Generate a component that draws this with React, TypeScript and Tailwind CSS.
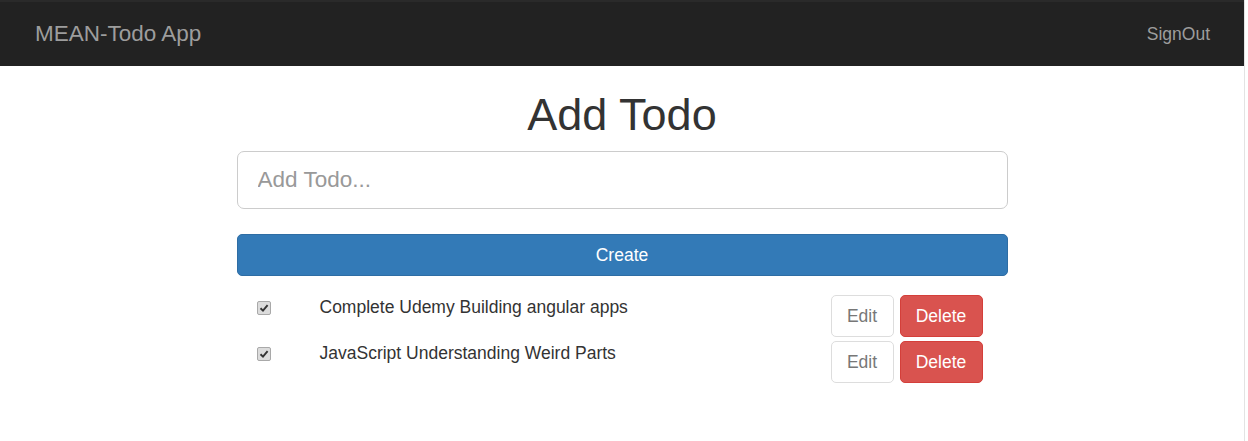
import React, { useState } from "react";

type Todo = { id: number; text: string; done: boolean };

const initialTodos: Todo[] = [
  { id: 1, text: "Complete Udemy Building angular apps", done: true },
  { id: 2, text: "JavaScript Understanding Weird Parts", done: true },
];

const CheckBox = ({ checked }: { checked: boolean }) => (
  <span className="mt-[6px] ml-[20px] flex h-[14px] w-[14px] items-center justify-center rounded-[2px] border border-[#a9a9a9] bg-[#dcdcdc]">
    {checked && (
      <svg width="10" height="10" viewBox="0 0 10 10">
        <path d="M1.5 5.2 L4 7.6 L8.6 2.2" fill="none" stroke="#333" strokeWidth="1.9" />
      </svg>
    )}
  </span>
);

export default function App() {
  const [todos] = useState<Todo[]>(initialTodos);
  const [text, setText] = useState("");

  return (
    <div className="flex min-h-[441px] bg-white font-['Liberation_Sans',Arial,sans-serif] text-[17.5px] text-[#333]">
      <div className="flex-1">
        {/* navbar */}
        <nav className="flex h-[66px] items-center justify-between border-t-2 border-[#2a2a2a] bg-[#222] pl-[35px] pr-[34px]">
          <span className="text-[22.5px] text-[#9d9d9d]">MEAN-Todo App</span>
          <span className="text-[17.5px] text-[#9d9d9d]">SignOut</span>
        </nav>

        <div className="mx-auto w-[771px]">
          <h1 className="mt-[24px] mb-[11.5px] text-center text-[45px] leading-[49.5px] font-normal">
            Add Todo
          </h1>

          <input
            value={text}
            onChange={(e) => setText(e.target.value)}
            placeholder="Add Todo..."
            className="block h-[58px] w-full rounded-[7px] border border-[#ccc] px-[20px] text-[22.5px] text-[#555] outline-none placeholder:text-[#999]"
          />

          <button className="mt-[25px] block h-[42px] w-full rounded-[5px] border border-[#2e6da4] bg-[#337ab7] text-[17.5px] text-white">
            Create
          </button>

          <div className="mt-[19px] flex flex-col gap-[4px]">
            {todos.map((todo) => (
              <div key={todo.id} className="flex h-[42px] items-start">
                <CheckBox checked={todo.done} />
                <span className="ml-[49px] leading-[25px]">{todo.text}</span>
                <div className="mr-[25px] ml-auto flex gap-[6px]">
                  <button className="h-[42px] w-[63px] rounded-[5px] border border-[#ddd] bg-white text-[17.5px] text-[#777]">
                    Edit
                  </button>
                  <button className="h-[42px] w-[83px] rounded-[5px] border border-[#d43f3a] bg-[#d9534f] text-[17.5px] text-white">
                    Delete
                  </button>
                </div>
              </div>
            ))}
          </div>
        </div>
      </div>
      <div className="w-[4px] border-l border-[#e3e3e3] bg-white" />
    </div>
  );
}
